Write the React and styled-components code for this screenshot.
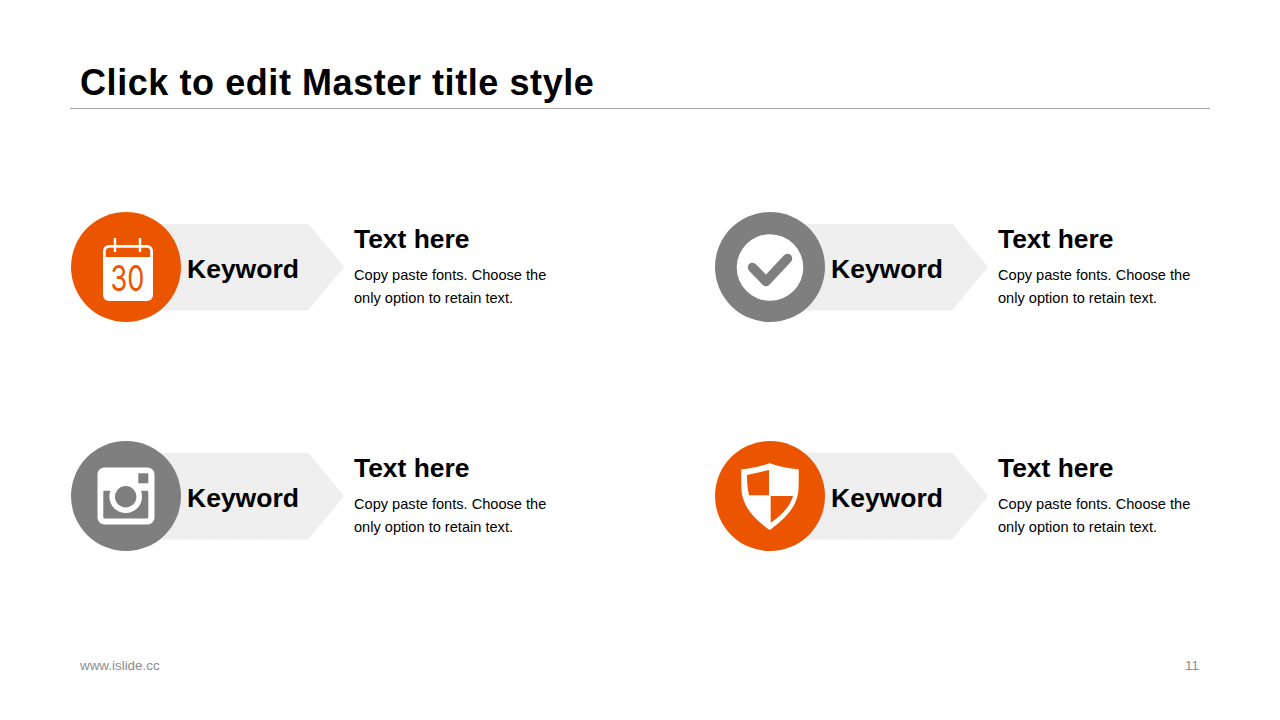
import React from "react";
import styled, { createGlobalStyle } from "styled-components";

const ORANGE = "#ec5500";
const GREY = "#7f7f7f";

const Global = createGlobalStyle`
  html, body { margin: 0; padding: 0; background: #fff; }
  body { font-family: "Liberation Sans", Arial, sans-serif; color: #000; }
`;

const Slide = styled.div`
  width: 1280px;
  height: 720px;
  display: flex;
  flex-direction: column;
  overflow: hidden;
  background: #fff;
`;

const Header = styled.header`
  margin: 0 70px;
  height: 109px;
  box-sizing: border-box;
  border-bottom: 1px solid #a6a6a6;
  padding: 62px 0 0 10px;
`;

const Title = styled.h1`
  margin: 0;
  font-size: 36px;
  line-height: 41px;
  font-weight: 700;
  letter-spacing: 0.57px;
`;

const Grid = styled.main`
  flex: 1;
  display: grid;
  grid-template-columns: 644px 496px;
  grid-template-rows: 110px 110px;
  row-gap: 119px;
  padding: 103px 0 0 71px;
`;

const Item = styled.section`
  display: flex;
  align-items: center;
`;

const Badge = styled.div`
  position: relative;
  z-index: 1;
  flex: none;
  width: 110px;
  height: 110px;
  border-radius: 50%;
  background: ${(p) => p.$color};
  display: flex;
`;

const Icon = styled.svg`
  width: 110px;
  height: 110px;
  display: block;
`;

const Arrow = styled.div`
  flex: none;
  width: 189px;
  height: 87px;
  margin-left: -26px;
  box-sizing: border-box;
  padding: 4px 0 0 32px;
  display: flex;
  align-items: center;
  background-color: #eeeeee;
  background-image: radial-gradient(#f3f3f3 0.6px, transparent 0.8px);
  background-size: 3px 3px;
  clip-path: polygon(0 0, calc(100% - 36px) 0, 100% 50%, calc(100% - 36px) 100%, 0 100%);
  font-size: 26.5px;
  font-weight: 700;
  line-height: 1;
`;

const Copy = styled.div`
  margin-left: 10px;
`;

const Heading = styled.h2`
  margin: 0 0 9px;
  font-size: 26.4px;
  line-height: 31px;
  font-weight: 700;
`;

const Body = styled.p`
  margin: 0;
  font-size: 14.6px;
  line-height: 23px;
  white-space: pre-line;
`;

const Footer = styled.footer`
  display: flex;
  justify-content: space-between;
  padding: 0 81px 47px 80px;
  font-size: 13.4px;
  line-height: 15px;
  color: #8c8c8c;
`;

const CalendarIcon = () => (
  <Icon viewBox="0 0 110 110">
    <rect x="32" y="33" width="50" height="56" rx="6" fill="#fff" />
    <path d="M34.8 45V39.5a3.7 3.7 0 0 1 3.7-3.7H75.5a3.7 3.7 0 0 1 3.7 3.7V45Z" fill={ORANGE} />
    <path d="M44 26V40M69 26V40" stroke="#fff" strokeWidth="2.4" />
    <text
      x="39.5"
      y="78.6"
      fontFamily="Inter, sans-serif"
      fontWeight="400"
      fontSize="36"
      fill={ORANGE}
      textLength="34"
      lengthAdjust="spacingAndGlyphs"
    >
      30
    </text>
  </Icon>
);

const CheckIcon = () => (
  <Icon viewBox="0 0 110 110">
    <circle cx="55" cy="55.5" r="33.3" fill="#fff" />
    <path d="M37.5 55.5 51 69.5 72.5 46.5" fill="none" stroke={GREY} strokeWidth="9.5" strokeLinecap="round" strokeLinejoin="round" />
  </Icon>
);

const CameraIcon = () => (
  <Icon viewBox="0 0 110 110">
    <rect x="26.5" y="26.5" width="57" height="57" rx="7" fill="#fff" />
    <rect x="32.3" y="49.7" width="45" height="27.8" rx="1" fill={GREY} />
    <circle cx="54.7" cy="55.7" r="16.3" fill="#fff" />
    <circle cx="54.7" cy="55.7" r="10.7" fill={GREY} />
    <rect x="67.3" y="32.3" width="10" height="10" fill={GREY} />
  </Icon>
);

const ShieldIcon = () => (
  <Icon viewBox="0 0 110 110">
    <path d="M54.7 22.3C64 25.5 74 27.8 83.7 28.3C83.7 45 84 50 82 57C78 70 66 81 54.7 89C43 81 31.5 70 28 57C26 50 26.3 45 26.3 28.3C36 27.8 45 25.5 54.7 22.3Z" fill="#fff" />
    <path d="M32 34 54 29V54.3H34C32.5 48 32 42 32 34Z" fill={ORANGE} />
    <path d="M55.7 55H78C75.5 65 66 75 55.7 81.7Z" fill={ORANGE} />
  </Icon>
);

const items = [
  { color: ORANGE, icon: <CalendarIcon /> },
  { color: GREY, icon: <CheckIcon /> },
  { color: GREY, icon: <CameraIcon /> },
  { color: ORANGE, icon: <ShieldIcon /> },
];

export default function App() {
  return (
    <Slide>
      <Global />
      <Header>
        <Title>Click to edit Master title style</Title>
      </Header>
      <Grid>
        {items.map((it, i) => (
          <Item key={i}>
            <Badge $color={it.color}>{it.icon}</Badge>
            <Arrow>Keyword</Arrow>
            <Copy>
              <Heading>Text here</Heading>
              <Body>{"Copy paste fonts. Choose the\nonly option to retain text."}</Body>
            </Copy>
          </Item>
        ))}
      </Grid>
      <Footer>
        <span>www.islide.cc</span>
        <span>11</span>
      </Footer>
    </Slide>
  );
}
